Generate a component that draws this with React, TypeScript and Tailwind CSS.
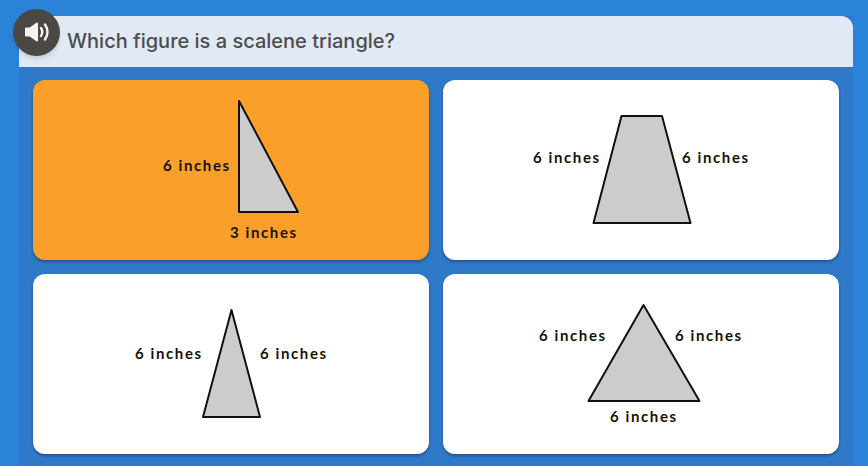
type Label = { text: string; x: number; y: number };

const figures: { points: string; labels: Label[]; selected?: boolean }[] = [
  {
    points: "206,21 206,132 265,132",
    labels: [
      { text: "6 inches", x: 130, y: 91 },
      { text: "3 inches", x: 197, y: 158 },
    ],
    selected: true,
  },
  {
    points: "178.5,36 219,36 247.5,143 150.5,143",
    labels: [
      { text: "6 inches", x: 90, y: 83 },
      { text: "6 inches", x: 239, y: 83 },
    ],
  },
  {
    points: "198.5,36 227,143 170,143",
    labels: [
      { text: "6 inches", x: 102, y: 85 },
      { text: "6 inches", x: 227, y: 85 },
    ],
  },
  {
    points: "200.5,31 256.5,127 145.5,127",
    labels: [
      { text: "6 inches", x: 96, y: 67 },
      { text: "6 inches", x: 232, y: 67 },
      { text: "6 inches", x: 167, y: 148 },
    ],
  },
];

const App = () => {
  return (
    <div className="relative h-[466px] w-[868px] overflow-hidden bg-[#2b83d9] pt-4 pl-[19px] font-['Inter',sans-serif]">
      {/* Sound button */}
      <button className="absolute top-[9px] left-[13px] flex h-[47px] w-[47px] items-center justify-center rounded-full bg-[#4a4745] pb-[1px] shadow-md">
        <svg viewBox="0 0 26 20" className="h-5 w-[26px]">
          <path d="M2 6.5H6L13 1.5V18.5L6 13.5H2Z" fill="#f4f4f4" stroke="#f4f4f4" strokeWidth="2" strokeLinejoin="round" />
          <path d="M17 6Q19.5 10 17 14" fill="none" stroke="#f4f4f4" strokeWidth="2.4" strokeLinecap="round" />
          <path d="M21 2.5Q26 10 21 17.5" fill="none" stroke="#f4f4f4" strokeWidth="2.4" strokeLinecap="round" />
        </svg>
      </button>

      <div className="h-[450px] w-[834px] bg-[#2f79c9]">
        {/* Question */}
        <div className="flex h-[51px] items-center rounded-t-xl bg-[#e1e9f4] pb-[2px] pl-[48px]">
          <h1 className="text-[20px] font-medium text-[#4d4d4d]">
            Which figure is a scalene triangle?
          </h1>
        </div>

        {/* Answers */}
        <div className="grid grid-cols-[396px_396px] gap-[14px] pt-[13px] pl-[14px]">
          {figures.map((figure) => (
            <div
              key={figure.points}
              className={`h-[180px] overflow-hidden rounded-xl shadow-[0_2px_3px_rgba(0,0,0,0.3)] ${
                figure.selected ? "bg-[#fb9f2b]" : "bg-white"
              }`}
            >
              <svg viewBox="0 0 396 180" className="h-full w-full">
                <polygon
                  points={figure.points}
                  fill="#cccccc"
                  stroke="#111111"
                  strokeWidth="2"
                  strokeLinejoin="round"
                />
                {figure.labels.map((label) => (
                  <text
                    key={label.x}
                    x={label.x}
                    y={label.y}
                    fill="#1a1208"
                    className="font-['Lato',sans-serif] text-[15px] font-bold tracking-[1.6px]"
                  >
                    {label.text}
                  </text>
                ))}
              </svg>
            </div>
          ))}
        </div>
      </div>
    </div>
  );
};

export default App;
